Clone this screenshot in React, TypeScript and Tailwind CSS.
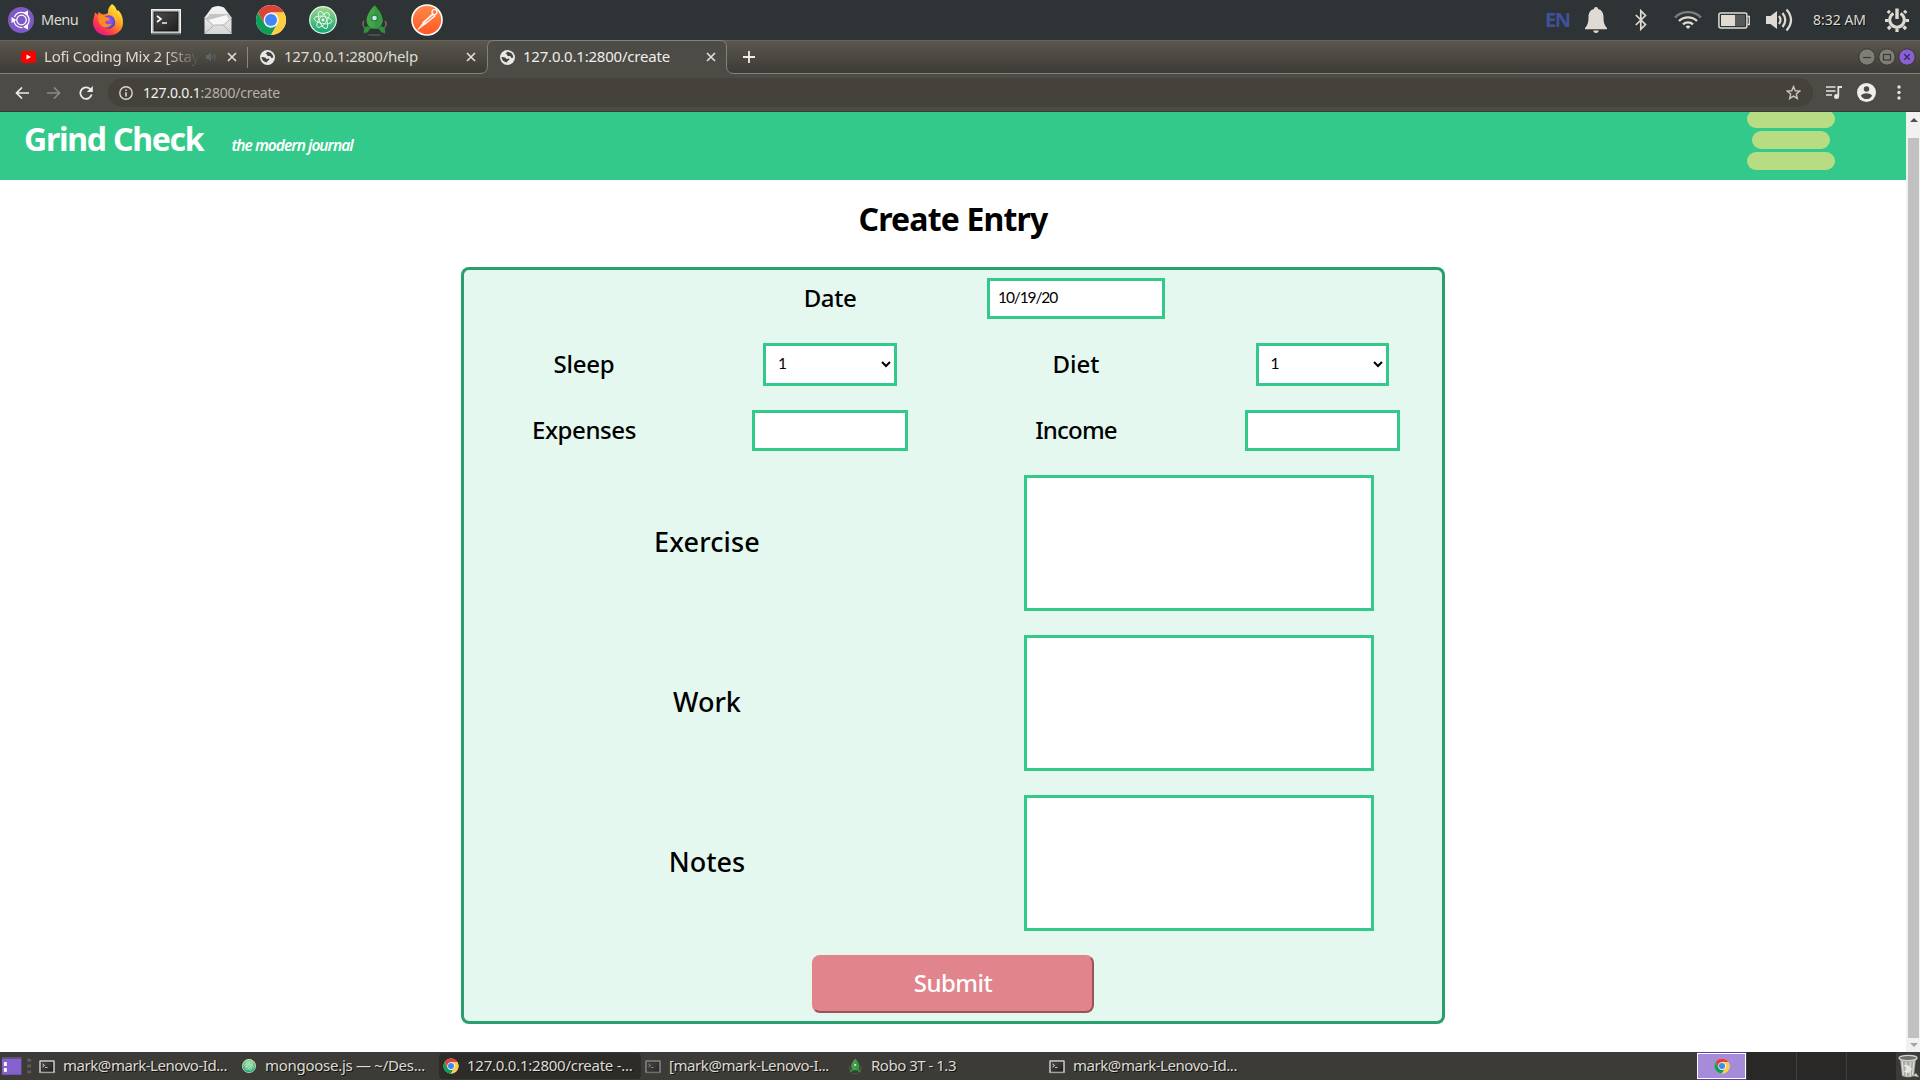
import React from "react";

/* ---------- icons ---------- */

function ChromeIcon({ className }: { className: string }) {
  return (
    <svg viewBox="0 0 32 32" className={className}>
      <circle cx="16" cy="16" r="15" fill="#fff" />
      <path d="M3 8.5A15 15 0 0 1 29 8.5H16L9.5 19.7z" fill="#db4437" />
      <path d="M3 8.5L9.5 19.75A7.5 7.5 0 0 0 22.5 19.75L16 31A15 15 0 0 1 3 8.5z" fill="#0f9d58" />
      <path d="M29 8.5A15 15 0 0 1 16 31L22.5 19.75A7.5 7.5 0 0 0 16 8.5z" fill="#ffcd40" />
      <circle cx="16" cy="16" r="7.4" fill="#f1f1f1" />
      <circle cx="16" cy="16" r="6" fill="#4285f4" />
    </svg>
  );
}

function TerminalIcon({ className }: { className: string }) {
  return (
    <svg viewBox="0 0 32 32" className={className}>
      <defs>
        <linearGradient id="term" x1="0" y1="0" x2="1" y2="1">
          <stop offset="0" stopColor="#4c4c4c" />
          <stop offset="1" stopColor="#1e1e1e" />
        </linearGradient>
      </defs>
      <rect x="1.5" y="5.5" width="29" height="24" fill="#c9c9c9" stroke="#f4f4f4" />
      <rect x="1" y="29" width="30" height="1.5" fill="#777" />
      <rect x="4" y="8" width="24" height="19" fill="url(#term)" stroke="#111" strokeWidth="0.8" />
      <path d="M7 12l4 3-4 3" fill="none" stroke="#fff" strokeWidth="1.6" />
      <path d="M12 19h5" stroke="#fff" strokeWidth="1.4" />
    </svg>
  );
}

function AtomIcon({ className }: { className: string }) {
  return (
    <svg viewBox="0 0 32 32" className={className}>
      <defs>
        <linearGradient id="atom" x1="0" y1="0" x2="0" y2="1">
          <stop offset="0" stopColor="#9bd98a" />
          <stop offset="1" stopColor="#12a675" />
        </linearGradient>
      </defs>
      <circle cx="16" cy="16" r="13.3" fill="url(#atom)" stroke="#e6f7ec" strokeWidth="1.2" />
      <g fill="none" stroke="#e9f8ee" strokeWidth="0.9">
        <ellipse cx="16" cy="16" rx="9" ry="3.6" transform="rotate(10 16 16)" />
        <ellipse cx="16" cy="16" rx="9" ry="3.6" transform="rotate(68 16 16)" />
        <ellipse cx="16" cy="16" rx="9" ry="3.6" transform="rotate(128 16 16)" />
      </g>
      <circle cx="16" cy="16" r="1.4" fill="#fff" />
    </svg>
  );
}

function RocketIcon({ className }: { className: string }) {
  return (
    <svg viewBox="0 0 32 32" className={className}>
      <path d="M6 17c-2 3-1 6 2 8M27 17c2 3 1 6-2 8" fill="none" stroke="#77705c" strokeWidth="1.4" />
      <path d="M16.5 1.5c4 4 8 9.500 8 15 0 3-2 6-4.500 8h-7c-2.500-2-4.500-5-4.500-8 0-5.500 4-11 8-15z" fill="#43a547" />
      <path d="M16.500 1.500c4 4 8 9.500 8 15 0 3-2 6-4.500 8h-3.500z" fill="#389a3e" />
      <path d="M10 22c-3 1-5 3-4 8 1-2 3-1 4-2 1-1 1-3 3-3zM23 22c3 1 5 3 4 8-1-2-3-1-4-2-1-1-1-3-3-3z" fill="#2f8f3a" />
      <circle cx="16.500" cy="14" r="3.600" fill="#2c7d5c" />
      <circle cx="16.500" cy="14" r="2.300" fill="#c9ece2" />
      <path d="M10.500 31h12" stroke="#5b6163" strokeWidth="1.200" />
    </svg>
  );
}

function FirefoxIcon() {
  return (
    <svg viewBox="0 0 32 32" className="size-8 shrink-0">
      <defs>
        <linearGradient id="fxa" x1="0.85" y1="0.1" x2="0.2" y2="0.95">
          <stop offset="0" stopColor="#fff13d" />
          <stop offset="0.4" stopColor="#ff9a22" />
          <stop offset="0.75" stopColor="#ff3a4b" />
          <stop offset="1" stopColor="#e6158c" />
        </linearGradient>
        <radialGradient id="fxb" cx="0.5" cy="0.4" r="0.6">
          <stop offset="0" stopColor="#a259f5" />
          <stop offset="1" stopColor="#4a42c8" />
        </radialGradient>
      </defs>
      <path d="M20 0c3 2 4.500 4.500 5 7l1-1c4 4 5 8 5 13 0 8-7 12.500-15 12.500S1 27 1 18.500C1 14 2.500 12 3 8.500c1 .5 2 1.500 2.500 2.500.5-1 .500-2 1.500-3 1 1.500 3 2.500 5 2.500 2-.5 3-1 4-1.500-.5-4 1.500-7 4-9z" fill="url(#fxa)" />
      <circle cx="16.500" cy="18" r="6.800" fill="url(#fxb)" />
      <path d="M6 12c4-1 7 0 8.500 1.500 2 0 3.500.5 3 1.500-.5 1.500-3 1.500-4.500 3 1 3 4 2.500 7 1.500-1.500 3.500-6 5-9.500 3C7 20.500 6 17 6 12z" fill="#ff8a20" />
      <path d="M17 10c4 0 7 4 6.500 8 2-3 1-8-1.500-10-1 1-3 1.500-5 2z" fill="#ffc22e" />
    </svg>
  );
}

function MailIcon() {
  return (
    <svg viewBox="0 0 32 32" className="size-8 shrink-0">
      <defs>
        <linearGradient id="mail" x1="0" y1="0" x2="0" y2="1">
          <stop offset="0" stopColor="#f6f6f6" />
          <stop offset="1" stopColor="#d5d5d5" />
        </linearGradient>
      </defs>
      <path d="M2.500 13.500L10 3.500q6-3 12 0l7.500 10V30h-27z" fill="url(#mail)" />
      <path d="M4 14.500L10.500 20h10L28 13l-2-3H8z" fill="#c4c4c4" />
      <path d="M6 16l19-5 2 6-6 4-10 .500z" fill="#f7f7f7" />
      <path d="M3 29.500L12 21h9l8.500 8.500M3 14l8.500 7.500M29.500 14L21 21.500" fill="none" stroke="#a9a9a9" strokeWidth="0.900" />
    </svg>
  );
}

function PostmanIcon() {
  return (
    <svg viewBox="0 0 32 32" className="size-8 shrink-0">
      <defs>
        <linearGradient id="pm" x1="0" y1="0" x2="0" y2="1">
          <stop offset="0" stopColor="#ff8a4c" />
          <stop offset="1" stopColor="#ff5722" />
        </linearGradient>
      </defs>
      <circle cx="16" cy="16" r="15" fill="url(#pm)" stroke="#fff" strokeWidth="1.600" />
      <circle cx="23.500" cy="8" r="2.500" fill="#ff7a42" stroke="#fff" strokeWidth="1.200" />
      <path d="M21.500 10L12 18.500l1.800 1.800L24 12z" fill="#ffd9c8" stroke="#fff" strokeWidth="1.100" />
      <path d="M12.500 18.500l1.500 1.500-7 5.500z" fill="#fff" stroke="#fff" strokeWidth="0.800" />
      <path d="M15.500 17.500l7-6" stroke="#ff6c37" strokeWidth="0.900" />
    </svg>
  );
}

function UbuntuIcon() {
  return (
    <svg viewBox="0 0 26 26" className="size-[26px] shrink-0">
      <circle cx="13" cy="13" r="13" fill="#7f5ac4" />
      <circle cx="13.500" cy="13" r="7.600" fill="none" stroke="#fff" strokeWidth="1.300" strokeDasharray="13.500 2.400" strokeDashoffset="5" />
      <circle cx="13.500" cy="13" r="4.800" fill="none" stroke="#fff" strokeWidth="1.300" />
      <path d="M3.500 10l5 3-5 3z" fill="#fff" />
      <path d="M20 3.500v6l-5-3.500zM20 22.500v-6l-5 3.500z" fill="#fff" />
    </svg>
  );
}

function GlobeIcon() {
  return (
    <svg viewBox="0 0 16 16" className="size-[15px] shrink-0">
      <circle cx="8" cy="8" r="8" fill="#e9e8e6" />
      <path d="M1.600 7.500c1.500 0 3 .500 4 .500 1 .200.500 1.500 1.500 1.600 1 .200 1.400-.900 2.400-.600.900.500.500 1.500-.400 2-.900.500-1.500 1.200-1.500 2.200-2.900 0-5.600-2-6-5.700zM7.600 1.800c-.200 1-.800 1.300-1.800 1.500.200 1.200 1 .900 1.600 1.400.500.500.100 1.500 1 1.800.900.200 1.700-.200 2.500.200.800.400.500 1.400 1.300 1.700.6.200 1.300-.100 2-.500-.200-3.500-2.900-6-6.600-6.100z" fill="#45433e" />
    </svg>
  );
}

function CloseIcon() {
  return (
    <svg viewBox="0 0 10 10" className="size-[10px] shrink-0">
      <path d="M1 1l8 8M9 1L1 9" stroke="#e4e1da" strokeWidth="1.600" />
    </svg>
  );
}

/* ---------- desktop bars ---------- */

function DesktopPanel() {
  return (
    <div className="flex h-10 shrink-0 items-center bg-[#2e3436] pl-2 text-[#dfdbd2]">
      <UbuntuIcon />
      <span className="ml-[7px] w-[51px] pb-px text-[14.500px] tracking-[-0.500px]">Menu</span>
      <div className="flex items-center">
        <FirefoxIcon />
        <TerminalIcon className="ml-[26px] size-8 shrink-0" />
        <div className="ml-5 flex"><MailIcon /></div>
        <ChromeIcon className="ml-[21px] size-8 shrink-0" />
        <AtomIcon className="ml-5 size-8 shrink-0" />
        <RocketIcon className="ml-[19px] size-8 shrink-0" />
        <div className="ml-[21px] flex"><PostmanIcon /></div>
      </div>
      <span className="ml-auto w-[40px] pb-px font-['Noto_Sans'] text-[20px] leading-5 font-bold tracking-[-1.500px] text-[#41509c]">EN</span>
      <svg viewBox="0 0 22 26" className="h-[26px] w-[22px] shrink-0" fill="#dfdbd2">
        <path d="M11 0c1.300 0 2 .800 2 2 4 1 5.500 4 5.500 8 0 5.500 1 8.500 3.500 11v1.200H0V21c2.500-2.500 3.500-5.500 3.500-11 0-4 1.500-7 5.500-8 0-1.200.700-2 2-2zM8.300 23.500h5.400c0 1.500-1 2.500-2.700 2.500s-2.700-1-2.700-2.500z" />
      </svg>
      <svg viewBox="0 0 12 22" className="ml-7 h-[22px] w-3 shrink-0" fill="none" stroke="#dfdbd2" strokeWidth="1.700">
        <path d="M.800 6l9.700 9.500-4.700 4.700V1.800l4.700 4.700L.800 16" />
      </svg>
      <svg viewBox="0 0 28 18" className="ml-[27px] h-[18px] w-7 shrink-0" fill="none" stroke="#dfdbd2" strokeWidth="2.400">
        <path d="M1 6.500a18.500 18.500 0 0 1 26 0" stroke="#7c7e7c" />
        <path d="M5 10a13 13 0 0 1 18 0" />
        <path d="M9 13.300a7.500 7.500 0 0 1 10 0" />
        <path d="M11.500 15.500a4 4 0 0 1 5 0L14 18z" fill="#dfdbd2" stroke="none" />
      </svg>
      <svg viewBox="0 0 32 17" className="ml-4 h-[17px] w-8 shrink-0">
        <rect x="0.900" y="0.900" width="28" height="15" rx="2" fill="none" stroke="#dfdbd2" strokeWidth="1.500" />
        <path d="M29.500 4.500h1.800v8h-1.800" fill="none" stroke="#dfdbd2" strokeWidth="1.300" />
        <rect x="3" y="3" width="14" height="11" fill="#dfdbd2" />
        <rect x="17" y="3" width="10" height="11" fill="#55595a" />
      </svg>
      <svg viewBox="0 0 28 24" className="ml-4 h-6 w-7 shrink-0">
        <path d="M0 8h4.500L11 3v18l-6.500-5H0z" fill="#dfdbd2" />
        <g fill="none" stroke="#dfdbd2" strokeWidth="2.200">
          <path d="M13 8q3 4 0 8" />
          <path d="M16.500 5q5.500 7 0 14" />
          <path d="M20.500 1.500q9 10.500 0 21" />
        </g>
      </svg>
      <span className="ml-[19px] w-[72px] pb-px text-[14px] [text-shadow:1px_1px_0_#111]">8:32 AM</span>
      <svg viewBox="0 0 24 24" className="mr-[11px] size-6 shrink-0" fill="none" stroke="#dfdbd2">
        <path d="M8.500 5.500a7.300 7.300 0 1 0 7 0" strokeWidth="3" />
        <path d="M12 .500v10.500" strokeWidth="3.400" />
        <path d="M4.800 4.800L2.800 2.800M19.200 4.800l2-2M3.500 12.500H0M24 12.500h-3.500M5.500 18.500l-2.500 2.500M18.500 18.500l2.500 2.500M12 20.500V24" strokeWidth="3.200" />
      </svg>
    </div>
  );
}

function WindowButton({ kind }: { kind: "min" | "max" | "close" }) {
  return (
    <svg viewBox="0 0 18 18" className="size-[18px] shrink-0">
      <circle cx="9" cy="9" r="8.200" fill={kind === "close" ? "#8a5fd6" : "#7f7d77"} stroke="#37352f" strokeWidth="1" />
      {kind === "min" && <path d="M5 9.500h8" stroke="#3b3934" strokeWidth="1.200" />}
      {kind === "max" && <rect x="5.500" y="6.500" width="7" height="5.500" fill="none" stroke="#3b3934" strokeWidth="1.200" />}
      {kind === "close" && <path d="M6.300 6.300l5.400 5.400M11.700 6.300l-5.400 5.400" stroke="#3b2a5c" strokeWidth="1.400" />}
    </svg>
  );
}

function TabStrip() {
  return (
    <div className="flex h-[34px] shrink-0 items-center border-t border-b border-t-[#67645a] border-b-[#84827b] bg-linear-to-b from-[#5b574d] to-[#3d3b37] text-[15px] text-[#dfdcd4]">
      <div className="flex w-[247px] items-center pl-[21px]">
        <svg viewBox="0 0 15 12" className="h-3 w-[15px] shrink-0">
          <rect width="15" height="12" rx="3" fill="#f00" />
          <path d="M5.500 3.500l4.500 2.500-4.500 2.500z" fill="#fff" />
        </svg>
        <span className="ml-2 w-[155px] overflow-hidden pb-px tracking-[-0.230px] whitespace-nowrap [mask-image:linear-gradient(90deg,#000_78%,transparent_100%)]">Lofi Coding Mix 2 [Stay</span>
        <svg viewBox="0 0 10 10" className="ml-[7px] size-[10px] shrink-0">
          <path d="M0 3h2l3-2.500v9L2 7H0z" fill="#5b6467" />
          <path d="M6.500 3q1.300 2 0 4M8.300 1.500q2 3.500 0 7" fill="none" stroke="#5b6467" />
        </svg>
        <div className="ml-[11px] flex"><CloseIcon /></div>
      </div>
      <div className="h-[21px] w-px bg-[#8a8880]" />
      <div className="flex w-[239px] items-center pl-3">
        <GlobeIcon />
        <span className="ml-[9px] w-[182px] pb-px tracking-[-0.230px]">127.0.0.1:2800/help</span>
        <CloseIcon />
      </div>
      <div className="relative flex h-8 w-[240px] items-center pl-[13px]">
        <svg viewBox="0 0 254 35" className="absolute -top-px -left-[7px] h-[35px] w-[254px]">
          <path d="M0 33.500Q7.500 33.500 7.500 26V7Q7.500.500 14 .500H240Q246.500.500 246.500 7V26Q246.500 33.500 254 33.500V35H0z" fill="#4d4b45" />
          <path d="M0 33.500Q7.500 33.500 7.500 26V7Q7.500.500 14 .500H240Q246.500.500 246.500 7V26Q246.500 33.500 254 33.500" fill="none" stroke="#84827b" />
        </svg>
        <div className="relative flex items-center">
          <GlobeIcon />
          <span className="ml-[8px] w-[183px] pb-px tracking-[-0.210px] text-[#efeeea]">127.0.0.1:2800/create</span>
          <CloseIcon />
        </div>
      </div>
      <svg viewBox="0 0 12 12" className="ml-4 size-3 shrink-0">
        <path d="M6 0v12M0 6h12" stroke="#efeeea" strokeWidth="1.800" />
      </svg>
      <div className="mr-1 ml-auto flex gap-0.5">
        <WindowButton kind="min" />
        <WindowButton kind="max" />
        <WindowButton kind="close" />
      </div>
    </div>
  );
}

function Toolbar() {
  return (
    <div className="flex h-[38px] shrink-0 items-center border-b border-[#3b3935] bg-[#4d4b45] pl-[15px]">
      <svg viewBox="0 0 14 12" className="h-3 w-[14px] shrink-0" fill="none" stroke="#eeedea" strokeWidth="1.700">
        <path d="M14 6H1.500M7 .500L1.500 6 7 11.500" />
      </svg>
      <svg viewBox="0 0 14 12" className="ml-[18px] h-3 w-[14px] shrink-0" fill="none" stroke="#8c8a85" strokeWidth="1.700">
        <path d="M0 6h12.500M7 .500L12.500 6 7 11.500" />
      </svg>
      <svg viewBox="0 0 14 14" className="ml-[18px] size-[14px] shrink-0">
        <path d="M11.700 3.800A5.700 5.700 0 1 0 12.600 8.500" fill="none" stroke="#eeedea" strokeWidth="1.800" />
        <path d="M13.800 0v6H7.800z" fill="#eeedea" />
      </svg>
      <div className="ml-[15px] flex h-[29px] w-[1705px] items-center rounded-full bg-[#45423c] pr-3 pl-[11px]">
        <svg viewBox="0 0 14 14" className="size-[14px] shrink-0" fill="none" stroke="#d9d7d2" strokeWidth="1.400">
          <circle cx="7" cy="7" r="6.200" />
          <path d="M7 6.200V10.500M7 3.500V5" strokeWidth="1.600" />
        </svg>
        <span className="ml-[10px] pb-px text-[14px] tracking-[-0.200px] text-[#b4b1aa]"><span className="text-[#f3f2ef]">127.0.0.1</span>:2800/create</span>
        <svg viewBox="0 0 24 24" className="ml-auto size-[15px] shrink-0" fill="none" stroke="#c9c6c0" strokeWidth="2.200">
          <path d="M12 2.500l2.800 6.700 7.200.600-5.500 4.700 1.700 7L12 17.700l-6.200 3.800 1.700-7L2 9.800l7.200-.600z" />
        </svg>
      </div>
      <svg viewBox="0 0 16 13" className="ml-[13px] h-[13px] w-4 shrink-0">
        <path d="M0 1h9.500M0 5h9.500M0 9h6" stroke="#e5e3df" strokeWidth="1.700" />
        <circle cx="10.500" cy="10.500" r="2.500" fill="#e5e3df" />
        <path d="M12.300 10.500V1H16" fill="none" stroke="#e5e3df" strokeWidth="1.800" />
      </svg>
      <svg viewBox="0 0 20 20" className="ml-[15px] size-[19px] shrink-0">
        <circle cx="10" cy="10" r="10" fill="#efeeec" />
        <circle cx="10" cy="6.300" r="2.900" fill="#4d4b45" />
        <path d="M4 13.500c1.500-2 4-2.700 6-2.700s4.500.700 6 2.700a7 7 0 0 1-12 0z" fill="#4d4b45" />
      </svg>
      <svg viewBox="0 0 4 15" className="ml-[21px] h-[15px] w-1 shrink-0" fill="#e5e3df">
        <circle cx="2" cy="2" r="1.700" /><circle cx="2" cy="7.500" r="1.700" /><circle cx="2" cy="13" r="1.700" />
      </svg>
    </div>
  );
}

/* ---------- page ---------- */

function Label({ children, className }: { children: React.ReactNode; className: string }) {
  return <label className={"flex items-center justify-center leading-8 font-medium " + className}>{children}</label>;
}

const inputClass = "border-[3px] border-[#33c98a] bg-white";

function SelectBox({ className }: { className: string }) {
  return (
    <div className="flex items-center justify-center">
      <div className={"flex h-[43px] items-center border-[3px] border-[#33c98a] bg-white pr-[3px] pl-3 " + className}>
        <span className="pb-0.5 font-['Lato'] text-[15.500px]">1</span>
        <svg viewBox="0 0 10 7" className="ml-auto h-[7px] w-[10px]">
          <path d="M1 1l4 4 4-4" fill="none" stroke="#000" strokeWidth="2" />
        </svg>
      </div>
    </div>
  );
}

function TextRow({ label, tracking }: { label: string; tracking: string }) {
  return (
    <div className="grid grid-cols-2">
      <Label className={"pb-[3px] text-[27px] " + tracking}>{label}</Label>
      <div className="flex justify-center">
        <div className={"h-[136px] w-[350px] " + inputClass} />
      </div>
    </div>
  );
}

function EntryForm() {
  return (
    <div className="flex w-[984px] flex-col gap-6 rounded-lg bg-[#e4f8ef] py-[11px] text-black shadow-[inset_0_0_0_3px_#299f70]">
      <div className="grid grid-cols-4">
        <Label className="col-start-2 pb-0.5 text-[24px] tracking-[-0.400px]">Date</Label>
        <div className="flex justify-center">
          <div className={"flex h-[41px] w-[178px] items-center pb-0.5 pl-2 font-['Lato'] text-[15.500px] tracking-[-1.100px] " + inputClass}>10/19/20</div>
        </div>
      </div>
      <div className="grid grid-cols-4">
        <Label className="pb-0.5 text-[24px] tracking-[-0.200px]">Sleep</Label>
        <SelectBox className="w-[134px]" />
        <Label className="pb-0.5 text-[24px]">Diet</Label>
        <SelectBox className="w-[133px]" />
      </div>
      <div className="grid grid-cols-4">
        <Label className="pb-0.5 text-[24px] tracking-[-0.400px]">Expenses</Label>
        <div className="flex justify-center"><div className={"h-[41px] w-[156px] " + inputClass} /></div>
        <Label className="pb-0.5 text-[24px] tracking-[-0.800px]">Income</Label>
        <div className="flex justify-center"><div className={"h-[41px] w-[155px] " + inputClass} /></div>
      </div>
      <TextRow label="Exercise" tracking="tracking-[0.160px]" />
      <TextRow label="Work" tracking="tracking-normal" />
      <TextRow label="Notes" tracking="tracking-normal" />
      <button className="h-[58px] w-[282px] self-center rounded-lg border-2 border-t-[#e1848c] border-r-[#98545c] border-b-[#98545c] border-l-[#e1848c] bg-[#e1848c] pb-0.5 text-[24px] font-medium tracking-[-0.500px] text-white">
        Submit
      </button>
    </div>
  );
}

function Page() {
  return (
    <div className="flex h-[940px] shrink-0 overflow-hidden bg-white">
      <div className="flex w-[1906px] flex-col">
        <header className="flex h-[68px] shrink-0 justify-between bg-[#33c98a] pr-[71px] pl-[24px] text-white">
          <div className="flex items-baseline pt-[7px]">
            <span className="text-[32px] leading-10 font-bold tracking-[-1.250px]">Grind Check</span>
            <span className="ml-[28px] text-[15.500px] font-semibold italic tracking-[-0.980px]">the modern journal</span>
          </div>
          <div className="-mt-0.5 flex w-[88px] flex-col items-center gap-[3px]">
            <div className="h-[18px] w-[88px] shrink-0 rounded-full bg-[#b7dc84]" />
            <div className="h-[18px] w-[78px] shrink-0 rounded-full bg-[#b7dc84]" />
            <div className="h-[18px] w-[88px] shrink-0 rounded-full bg-[#b7dc84]" />
          </div>
        </header>
        <main className="flex flex-col items-center pt-[19px]">
          <h1 className="mb-7 text-[32px] leading-10 font-bold tracking-[-0.850px] text-black">Create Entry</h1>
          <EntryForm />
        </main>
      </div>
      <div className="flex w-[14px] flex-col items-center bg-[#f1f1f1] py-1.5 pl-px">
        <svg viewBox="0 0 8 4" className="mb-[16px] h-1 w-2 shrink-0"><path d="M4 0l4 4H0z" fill="#505050" /></svg>
        <div className="w-[11px] grow bg-[#c1c1c1]" />
        <svg viewBox="0 0 8 4" className="mt-[5px] mb-[-1px] h-1 w-2 shrink-0"><path d="M0 0h8L4 4z" fill="#a3a3a3" /></svg>
      </div>
    </div>
  );
}

function Task({ icon, text, className }: { icon: React.ReactNode; text: string; className: string }) {
  return (
    <div className={"flex h-[26px] w-[202px] items-center pl-1 text-[15px] whitespace-nowrap text-[#dfdbd2] [text-shadow:1px_1px_0_#111] " + className}>
      {icon}
      <span className="ml-2 pb-0.5">{text}</span>
    </div>
  );
}

function Taskbar() {
  return (
    <div className="flex h-7 shrink-0 items-center bg-[#3c3b37]">
      <svg viewBox="0 0 36 28" className="h-7 w-[35px] shrink-0">
        <rect x="2" y="5" width="20" height="18" fill="#8560cf" />
        <rect x="2" y="5" width="20" height="1.500" fill="#55515c" />
        <rect x="4" y="10" width="3" height="4" fill="#fff" />
        <rect x="4" y="16" width="3" height="4" fill="#fff" />
        <path d="M28 8h4M28 14h4M28 20h4" stroke="#5f5d58" strokeWidth="3" />
      </svg>
      <Task icon={<TerminalIcon className="size-4 shrink-0" />} text="mark@mark-Lenovo-Id..." className="tracking-[-0.450px]" />
      <Task icon={<AtomIcon className="size-4 shrink-0" />} text="mongoose.js — ~/Des..." className="tracking-[-0.280px]" />
      <Task icon={<ChromeIcon className="size-4 shrink-0" />} text="127.0.0.1:2800/create -..." className="rounded-sm bg-[#2d2c29] tracking-[-0.250px]" />
      <Task icon={<TerminalIcon className="size-4 shrink-0 opacity-50" />} text="[mark@mark-Lenovo-I..." className="tracking-[-0.440px]" />
      <Task icon={<RocketIcon className="size-4 shrink-0" />} text="Robo 3T - 1.3" className="tracking-[-0.490px]" />
      <Task icon={<TerminalIcon className="size-4 shrink-0" />} text="mark@mark-Lenovo-Id..." className="tracking-[-0.450px]" />
      <div className="ml-auto flex h-7 bg-[#292826]">
        <div className="flex h-7 w-[49px] items-center justify-center border-y border-[#5b3fa0]">
          <div className="flex h-[26px] w-[49px] items-center justify-center border border-white bg-[#a68cd8]">
            <ChromeIcon className="size-4" />
          </div>
        </div>
        <div className="w-[51px] border-r border-l border-[#3f3e3a]" />
        <div className="w-[50px] border-r border-[#3f3e3a]" />
        <div className="w-[49px]" />
      </div>
      <svg viewBox="0 0 24 28" className="h-7 w-6 shrink-0">
        <path d="M4 6l2 18q6 2.500 12 0L20 6z" fill="#a9aaa6" />
        <path d="M6 9l1.500 14M10 10l.500 14.500M14.500 10l-.500 14.500M18 9l-1.500 14" stroke="#dcdcd9" strokeWidth="1.300" />
        <path d="M7 13l4 3-3 4 5 1 3-4-4-4z" fill="#e6e6e3" />
        <ellipse cx="12" cy="6" rx="9" ry="2.600" fill="#6f706c" stroke="#d3d3cf" strokeWidth="1.300" />
        <path d="M17 24l3-3 3 4z" fill="#c9c9c6" />
      </svg>
    </div>
  );
}

export default function App() {
  return (
    <div className="flex h-[1080px] w-[1920px] flex-col overflow-hidden bg-white font-['Noto_Sans',sans-serif]">
      <DesktopPanel />
      <TabStrip />
      <Toolbar />
      <Page />
      <Taskbar />
    </div>
  );
}
